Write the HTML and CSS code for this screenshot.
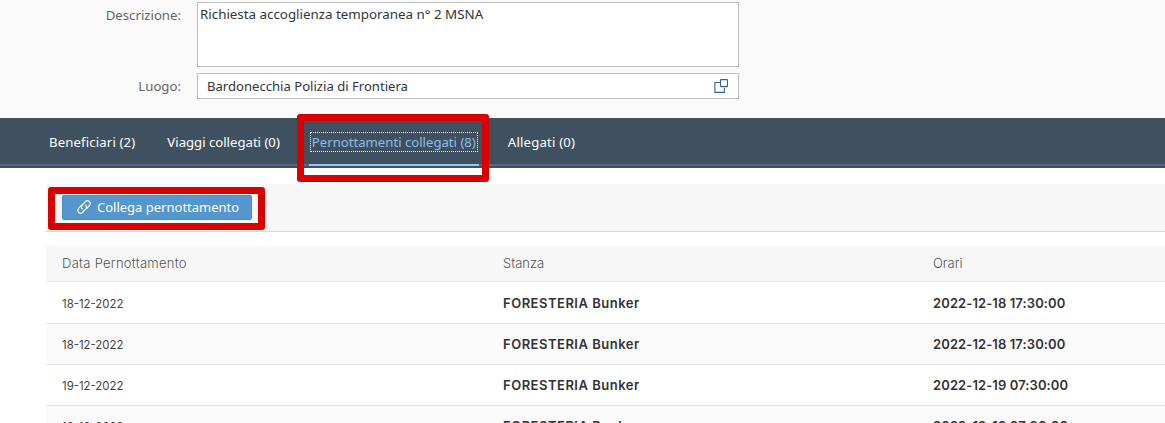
FILE: index.html
```html
<!DOCTYPE html>
<html lang="it">
<head>
<meta charset="utf-8">
<title>Richiesta accoglienza</title>
<link rel="stylesheet" href="styles.css">
</head>
<body>
<section class="form">
  <div class="row row-desc">
    <span class="label">Descrizione:</span>
    <div class="area">Richiesta accoglienza temporanea n° 2 MSNA</div>
  </div>
  <div class="row">
    <span class="label">Luogo:</span>
    <div class="input">
      <span>Bardonecchia Polizia di Frontiera</span>
      <svg class="copy" width="14" height="14" viewBox="0 0 14 14" fill="none" stroke="#346187" stroke-width="1.1">
        <path d="M6.5 3.5H0.9V13.4H10.4V9"/>
        <rect x="6.5" y="0.6" width="7" height="7" rx="0.5"/>
      </svg>
    </div>
  </div>
</section>
<nav class="tabs">
  <a class="tab first">Beneficiari (2)</a>
  <a class="tab">Viaggi collegati (0)</a>
  <a class="tab active"><span class="focus">Pernottamenti collegati (8)</span></a>
  <a class="tab last">Allegati (0)</a>
</nav>
<section class="content">
  <div class="toolbar">
    <button class="btn">
      <svg width="16" height="16" viewBox="1 1 14 14" fill="none" stroke="#fff" stroke-width="1" stroke-linecap="round">
        <path d="M5.6 6.6 3.2 9.4a2.4 2.4 0 0 0 3.6 3.2L9.8 9.4a2.4 2.4 0 0 0-.3-3"/>
        <path d="M10.4 9.4 12.8 6.6a2.4 2.4 0 0 0-3.6-3.2L6.2 6.6a2.4 2.4 0 0 0 .3 3"/>
      </svg>
      Collega pernottamento
    </button>
  </div>
  <div class="table">
    <div class="tr head"><span class="head-date">Data Pernottamento</span><span>Stanza</span><span>Orari</span></div>
    <div class="tr first-row"><span class="date">18-12-2022</span><b class="room">FORESTERIA Bunker</b><b class="time">2022-12-18 17:30:00</b></div>
    <div class="tr alt"><span class="date">18-12-2022</span><b class="room">FORESTERIA Bunker</b><b class="time">2022-12-18 17:30:00</b></div>
    <div class="tr"><span class="date">19-12-2022</span><b class="room">FORESTERIA Bunker</b><b class="time">2022-12-19 07:30:00</b></div>
    <div class="tr alt"><span class="date">19-12-2022</span><b class="room">FORESTERIA Bunker</b><b class="time">2022-12-19 07:30:00</b></div>
  </div>
</section>
<div class="mark mark-tab"></div>
<div class="mark mark-btn"></div>
</body>
</html>
```
FILE: styles.css
```css
html, body { margin: 0; height: 423px; overflow: hidden; background: #fff; }
body { position: relative; font-family: "Noto Sans", sans-serif; color: #32363a; }

.form { height: 118px; background: #fafafa; padding-top: 2px; box-sizing: border-box; }
.row { display: flex; gap: 16px; margin-bottom: 6px; }
.label { width: 181px; text-align: right; font-size: 13.2px; color: #666; padding-top: 4px; line-height: 18px; }
.area, .input { width: 542px; box-sizing: border-box; background: #fff; border: 1px solid #bfbfbf; line-height: 18px; }
.area { height: 65px; padding: 2px 2px; font-size: 13.35px; }
.input { height: 26px; padding: 3px 9px; display: flex; justify-content: space-between; align-items: center; font-size: 13.1px; }
.copy { margin-right: 1px; }

.tabs { height: 50px; box-sizing: border-box; background: #3f5161; border-bottom: 2px solid #3f5161; box-shadow: inset 0 -2px 0 #53697c; display: flex; gap: 29px; padding-left: 49px; }
.tab { height: 46px; line-height: 48px; font-size: 13.15px; color: #fff; box-sizing: border-box; white-space: nowrap; }
.tab.first { margin-right: 3px; letter-spacing: 0.15px; }
.tab.last { letter-spacing: 0.2px; }
.tab.active { color: #8cbce6; padding: 0 3px; border-bottom: 2px solid #91c8f6; height: 48px; }
.focus { display: inline-block; line-height: 18px; margin: 0 -1px; padding: 0 1px; outline: 1px dotted #fff; }

.content { padding: 16px 0 0 46px; }
.toolbar { height: 48px; box-sizing: border-box; background: #f7f7f7; border-bottom: 1px solid #d9d9d9; padding: 11px 0 0 16px; }
.btn { display: flex; align-items: center; gap: 5px; width: 190px; height: 25px; padding: 0 0 2px 13px; border: 1px solid #4a8dc4; border-radius: 2px; background: #5496cd; color: #fff; font: 13px "Noto Sans", sans-serif; }

.table { margin-top: 14px; font-family: Inter, sans-serif; }
.tr { display: grid; grid-template-columns: 441px 430px 1fr; align-items: center; height: 41px; box-sizing: border-box; border-bottom: 1px solid #e5e5e5; padding-left: 16px; font-size: 13px; background: #fff; color: #333; white-space: nowrap; }
.room, .time { font-weight: 600; }
.room { letter-spacing: 0.5px; }
.time { letter-spacing: 0.1px; }
.tr.first-row { height: 42px; }
.tr.head { height: 36px; padding-bottom: 2px; background: #f7f7f7; color: #555; font-weight: 300; }
.head-date { letter-spacing: 0.28px; }
.tr.alt { background: #fafafa; }
.date { font-size: 11.4px; color: #444; padding-top: 2px; }

.mark { position: absolute; box-sizing: border-box; border: 7px solid #d90000; border-radius: 3px; }
.mark-tab { left: 297px; top: 114px; width: 192px; height: 68px; }
.mark-btn { left: 48px; top: 187px; width: 217px; height: 43px; }
```
